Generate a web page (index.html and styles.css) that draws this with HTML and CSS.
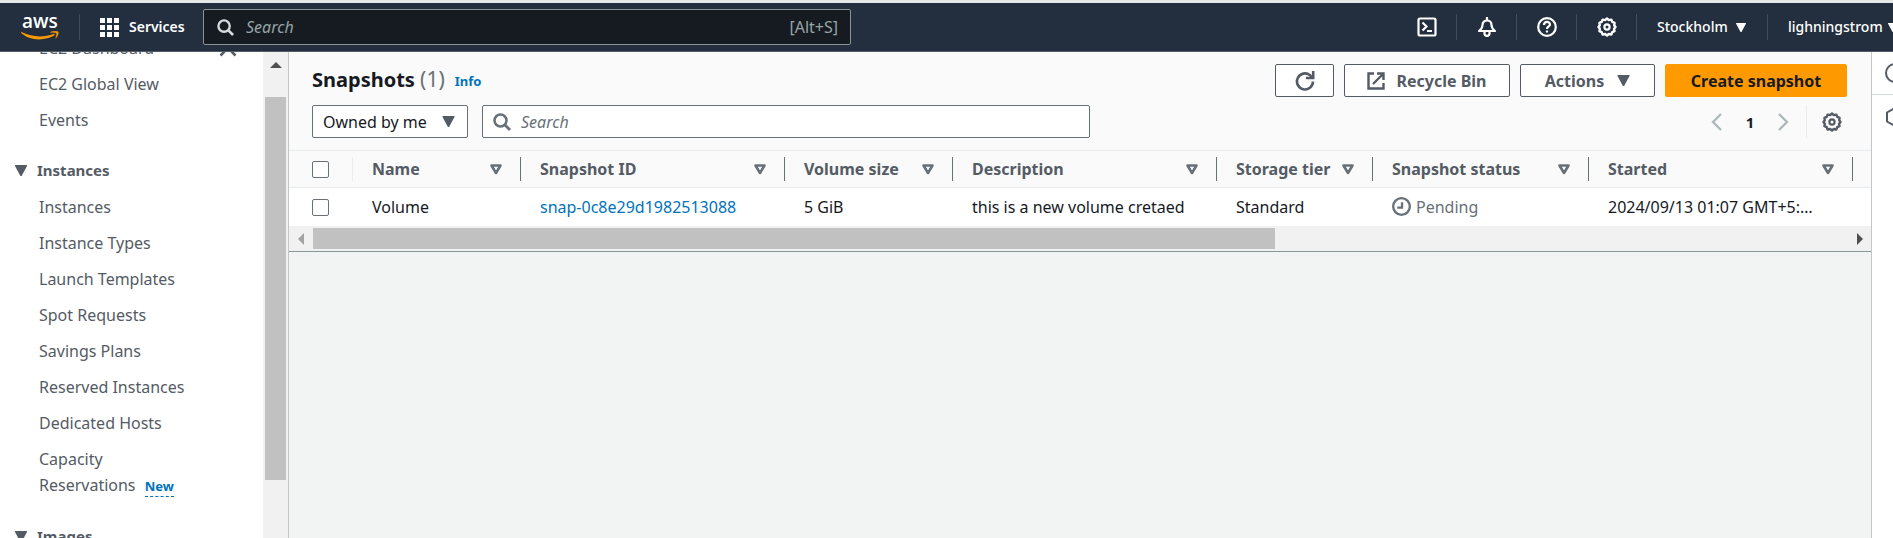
FILE: index.html
```html
<!DOCTYPE html>
<html lang="en">
<head>
<meta charset="utf-8">
<title>Snapshots | EC2</title>
<meta name="viewport" content="width=device-width, initial-scale=1">
<link rel="stylesheet" href="styles.css">
</head>
<body>
<svg class="sprite" aria-hidden="true">
  <symbol id="caret" viewBox="0 0 12 11"><path d="M0 0h12v1L6.600 11H5.400L0 1z" fill="currentColor"/></symbol>
  <symbol id="sort" viewBox="0 0 12 11"><path d="M1.500 1.500h9L6 9z" fill="none" stroke="currentColor" stroke-width="2.600" stroke-linejoin="round"/></symbol>
  <symbol id="search" viewBox="0 0 18 18"><circle cx="7.500" cy="7.500" r="6" fill="none" stroke="currentColor" stroke-width="2.500"/><path d="M11.800 11.800L17 17" stroke="currentColor" stroke-width="2.800"/></symbol>
  <symbol id="gear" viewBox="0 0 20 20"><path d="M10 1.500l1.900 1.600 2.500-.5.900 2.300 2.300 1-.4 2.400L18.500 10l-1.400 1.800.4 2.400-2.300 1-.9 2.300-2.500-.5L10 18.500 8.100 17l-2.500.5-.9-2.300-2.300-1 .4-2.400L1.500 10l1.300-1.700-.4-2.400 2.300-1 .9-2.300 2.500.5z" fill="none" stroke="currentColor" stroke-width="2.400" stroke-linejoin="round"/><circle cx="10" cy="10" r="2.600" fill="none" stroke="currentColor" stroke-width="2.200"/></symbol>
</svg>

<header class="topbar">
  <a class="logo" href="#" aria-label="AWS home">
    <span class="logo-text">aws</span>
    <svg class="logo-smile" viewBox="0 0 38 9"><path d="M0 .8C10 6 22 7 33 2.800l.9 1.300C23 10.500 9 10 0 1.800z" fill="#f90"/><path d="M29.500 1.300C32 0 36 0 37 .8c.8 1-.3 4.700-2.300 6.400.7-2 1.400-4.300.9-5-.6-.8-3.600-.9-6.100-.9z" fill="#f90" stroke="#f90" stroke-width=".5"/></svg>
  </a>
  <button class="services">
    <svg viewBox="0 0 19 19" width="19" height="19" fill="currentColor"><path d="M0 0h5v5H0zM7 0h5v5H7zM14 0h5v5h-5zM0 7h5v5H0zM7 7h5v5H7zM14 7h5v5h-5zM0 14h5v5H0zM7 14h5v5H7zM14 14h5v5h-5z"/></svg>
    <span>Services</span>
  </button>
  <label class="global-search">
    <svg width="17" height="17"><use href="#search"/></svg>
    <input type="text" placeholder="Search" aria-label="Search services">
    <kbd>[Alt+S]</kbd>
  </label>
  <div class="tools">
    <button class="tool" aria-label="CloudShell"><svg width="20" height="20" viewBox="0 0 20 20" fill="none" stroke="currentColor" stroke-width="2.200"><rect x="1.500" y="1.500" width="17" height="17" rx="1.500"/><path d="M5.500 5.500l4 4-4 4M10 14h5"/></svg></button>
    <button class="tool" aria-label="Notifications"><svg width="20" height="20" viewBox="0 0 20 20" fill="none" stroke="currentColor" stroke-width="2.200" stroke-linejoin="round"><path d="M10 0v3M2 14c2.500-2 3.500-3.500 3.500-6 0-6 9-6 9 0 0 2.500 1 4 3.500 6z"/><path d="M7.500 14v2.500a2.500 2.300 0 0 0 5 0V14"/></svg></button>
    <button class="tool" aria-label="Help"><svg width="20" height="20" viewBox="0 0 20 20" fill="none" stroke="currentColor" stroke-width="2.200"><circle cx="10" cy="10" r="8.800"/><path d="M7 8c0-4 6-4 6-.5 0 2-3 2-3 4.500M10 13.500v2"/></svg></button>
    <button class="tool" aria-label="Settings"><svg width="20" height="20"><use href="#gear"/></svg></button>
    <button class="region"><span>Stockholm</span><svg width="10" height="9"><use href="#caret"/></svg></button>
    <button class="account"><span>lighningstrom</span><svg width="10" height="9"><use href="#caret"/></svg></button>
  </div>
</header>

<div class="shell">
  <aside class="sidebar">
    <nav class="side-nav" aria-label="EC2">
      <div class="first-row">
        <a href="#">EC2 Dashboard</a>
        <button class="close" aria-label="Close navigation"><svg width="18" height="18" viewBox="0 0 18 18"><path d="M1.500 1.500l15 15M16.500 1.500l-15 15" stroke="currentColor" stroke-width="2.600"/></svg></button>
      </div>
      <a href="#">EC2 Global View</a>
      <a href="#">Events</a>
      <button class="section"><svg width="12" height="11"><use href="#caret"/></svg>Instances</button>
      <a href="#">Instances</a>
      <a href="#">Instance Types</a>
      <a href="#">Launch Templates</a>
      <a href="#">Spot Requests</a>
      <a href="#">Savings Plans</a>
      <a href="#">Reserved Instances</a>
      <a href="#">Dedicated Hosts</a>
      <a href="#">Capacity<br>Reservations <span class="new">New</span></a>
      <button class="section"><svg width="12" height="11"><use href="#caret"/></svg>Images</button>
    </nav>
    <div class="vscroll" aria-hidden="true">
      <svg width="12" height="6" viewBox="0 0 12 6"><path d="M6 0l6 6H0z" fill="#505050"/></svg>
      <div class="vthumb"></div>
    </div>
  </aside>

  <main class="content">
    <section class="panel">
      <div class="panel-head">
        <h1>Snapshots <span class="count">(1)</span></h1>
        <a class="info" href="#">Info</a>
        <div class="actions">
          <button class="btn refresh" aria-label="Refresh"><svg width="20" height="20" viewBox="0 0 20 20" fill="none" stroke="currentColor" stroke-width="2.600"><path d="M18 10.500A8 8 0 1 1 15 4.200l2.500 2.300"/><path d="M18.200 0v7H11"/></svg></button>
          <button class="btn recycle"><svg width="18" height="18" viewBox="0 0 18 18" fill="none" stroke="currentColor" stroke-width="2.400"><path d="M7 1.500H1.500v15h15V11M10 1.500h6.500V8M16.500 1.500L6 12"/></svg>Recycle Bin</button>
          <button class="btn menu">Actions<svg width="13" height="11"><use href="#caret"/></svg></button>
          <button class="btn primary">Create snapshot</button>
        </div>
      </div>
      <div class="filters">
        <button class="owner" aria-haspopup="listbox">Owned by me<svg width="13" height="11"><use href="#caret"/></svg></button>
        <label class="table-search">
          <svg width="18" height="18"><use href="#search"/></svg>
          <input type="text" placeholder="Search" aria-label="Search snapshots">
        </label>
        <div class="pager">
          <button class="arrow" aria-label="Previous page"><svg width="11" height="18" viewBox="0 0 11 18"><path d="M10 1L2 9l8 8" fill="none" stroke="currentColor" stroke-width="2.200"/></svg></button>
          <span class="page">1</span>
          <button class="arrow" aria-label="Next page"><svg width="11" height="18" viewBox="0 0 11 18"><path d="M1 1l8 8-8 8" fill="none" stroke="currentColor" stroke-width="2.200"/></svg></button>
          <button class="prefs" aria-label="Preferences"><svg width="20" height="20"><use href="#gear"/></svg></button>
        </div>
      </div>
      <table class="grid">
        <colgroup><col class="c-check"><col class="c-name"><col class="c-id"><col class="c-size"><col class="c-desc"><col class="c-tier"><col class="c-status"><col class="c-start"><col></colgroup>
        <thead>
          <tr>
            <th class="check"><div><input type="checkbox" aria-label="Select all"></div></th>
            <th><div>Name<svg width="12" height="11"><use href="#sort"/></svg></div></th>
            <th><div>Snapshot ID<svg width="12" height="11"><use href="#sort"/></svg></div></th>
            <th><div>Volume size<svg width="12" height="11"><use href="#sort"/></svg></div></th>
            <th><div>Description<svg width="12" height="11"><use href="#sort"/></svg></div></th>
            <th><div>Storage tier<svg width="12" height="11"><use href="#sort"/></svg></div></th>
            <th><div>Snapshot status<svg width="12" height="11"><use href="#sort"/></svg></div></th>
            <th><div>Started<svg width="12" height="11"><use href="#sort"/></svg></div></th>
            <th></th>
          </tr>
        </thead>
        <tbody>
          <tr>
            <td class="check"><input type="checkbox" aria-label="Select Volume"></td>
            <td>Volume</td>
            <td><a href="#">snap-0c8e29d1982513088</a></td>
            <td>5 GiB</td>
            <td>this is a new volume cretaed</td>
            <td>Standard</td>
            <td><span class="pending"><svg width="19" height="19" viewBox="0 0 18 18" fill="none" stroke="currentColor" stroke-width="2.200"><circle cx="9" cy="9" r="7.900"/><path d="M9.500 5v5H5"/></svg>Pending</span></td>
            <td>2024/09/13 01:07 GMT+5:…</td>
            <td></td>
          </tr>
        </tbody>
      </table>
      <div class="hscroll" aria-hidden="true">
        <svg width="6" height="12" viewBox="0 0 6 12"><path d="M6 0v12L0 6z" fill="#a3a3a3"/></svg>
        <div class="htrack"><div class="hthumb"></div></div>
        <svg width="6" height="12" viewBox="0 0 6 12"><path d="M0 0v12l6-6z" fill="#505050"/></svg>
      </div>
    </section>
  </main>

  <aside class="help-rail">
    <button aria-label="Info panel"><svg width="20" height="20" viewBox="0 0 20 20" fill="none" stroke="currentColor" stroke-width="2"><circle cx="10" cy="10" r="9"/><path d="M10 9v6M10 5v2"/></svg></button>
    <button aria-label="Shortcuts"><svg width="20" height="20" viewBox="0 0 20 20" fill="none" stroke="currentColor" stroke-width="2"><path d="M10 1l8 4.500v9L10 19l-8-4.500v-9z"/></svg></button>
  </aside>
</div>
</body>
</html>
```
FILE: styles.css
```css
* { box-sizing: border-box; }

body {
  margin: 0;
  height: 100vh;
  display: flex;
  flex-direction: column;
  overflow: hidden;
  border-top: 3px solid #e6e8e8;
  background: #f2f3f3;
  color: #16191f;
  font: 16px/26px "Noto Sans", "Open Sans", sans-serif;
}

a { color: inherit; text-decoration: none; }
button {
  display: flex;
  align-items: center;
  padding: 0;
  border: 0;
  background: none;
  color: inherit;
  font: inherit;
  white-space: nowrap;
}
input { font: inherit; }
svg { display: block; flex: none; }
.sprite { position: absolute; width: 0; height: 0; }

/* Top bar */
.topbar {
  flex: none;
  display: flex;
  align-items: center;
  height: 49px;
  background: #232f3e;
  border-bottom: 1px solid #545b64;
  color: #fff;
}
.logo {
  flex: none;
  width: 80px;
  height: 26px;
  padding-left: 21px;
  border-right: 1px solid #414d5c;
}
.logo-text { display: block; height: 17px; padding-left: 1px; font: 600 19px/14px "Open Sans", sans-serif; }
.logo-smile { width: 38px; height: 9px; }
.services { gap: 10px; width: 123px; padding-left: 20px; font-size: 14px; font-weight: 600; }
.global-search {
  flex: none;
  display: flex;
  align-items: center;
  width: 648px;
  height: 36px;
  padding: 0 12px 0 13px;
  background: #161b22;
  border: 1px solid #879596;
  border-radius: 2px;
  color: #d5dbdb;
}
.global-search input, .table-search input {
  flex: 1;
  min-width: 0;
  padding: 0 12px;
  border: 0;
  outline: 0;
  background: none;
  color: inherit;
}
.global-search input::placeholder { color: #95a5a6; font-style: italic; opacity: 1; }
.global-search kbd { color: #95a5a6; font: inherit; }
.tools { display: flex; align-items: center; margin-left: auto; font-size: 14px; font-weight: 500; }
.tools button { flex: none; height: 26px; border-right: 1px solid #414d5c; }
.tool { width: 60px; justify-content: center; }
.region { gap: 8px; width: 131px; padding-left: 20px; }
.tools .account { gap: 5px; width: 125px; padding-left: 20px; border: 0; }

/* Shell */
.shell { flex: 1; display: flex; min-height: 0; }

.sidebar { flex: none; display: flex; width: 289px; background: #fff; border-right: 1px solid #c0c6ca; overflow: hidden; }
.side-nav {
  flex: 1;
  display: flex;
  flex-direction: column;
  gap: 10px;
  margin-top: -17px;
  color: #545b64;
}
.side-nav a { padding-left: 39px; }
.first-row { display: flex; justify-content: space-between; align-items: center; padding-right: 26px; }
.section { flex: none; gap: 10px; margin: 14px 0 1px; padding-left: 15px; font-weight: 700; font-size: 15px; }
.new { margin-left: 5px; padding-bottom: 1px; border-bottom: 1px dashed #0073bb; color: #0073bb; font-size: 13px; font-weight: 700; }
.vscroll { flex: none; width: 25px; padding: 10px 2px 0; background: #f1f1f1; }
.vscroll svg { margin: 0 auto 29px 5px; }
.vthumb { width: 21px; height: 383px; background: #c1c1c1; }

.content { flex: 1; min-width: 0; }
.panel { background: #fafafa; border-bottom: 1px solid #879596; }
.panel-head { display: flex; align-items: flex-start; height: 53px; padding: 12px 24px 0 23px; }
h1 { margin: 0; font-size: 20px; font-weight: 700; line-height: 30px; }
.count { color: #687078; font-size: 21px; font-weight: 400; }
.info { margin-left: 10px; padding-top: 4px; color: #0073bb; font-size: 13px; font-weight: 700; }
.actions { display: flex; gap: 10px; margin-left: auto; }
.btn {
  justify-content: center;
  height: 33px;
  border: 1px solid #545b64;
  border-radius: 2px;
  background: #fff;
  color: #545b64;
  font-weight: 700;
}
.refresh { width: 59px; }
.recycle { width: 166px; gap: 11px; }
.menu { width: 135px; gap: 13px; }
.primary { width: 182px; background: #f90; border-color: #f90; color: #16191f; }

.filters { display: flex; align-items: flex-start; height: 45px; padding: 0 29px 0 23px; }
.owner { justify-content: space-between; width: 156px; height: 33px; padding: 0 12px 0 10px; background: #fff; border: 1px solid #687078; border-radius: 2px; }
.owner svg { color: #545b64; }
.table-search {
  display: flex;
  align-items: center;
  width: 608px;
  height: 33px;
  margin-left: 14px;
  padding: 0 10px;
  background: #fff;
  border: 1px solid #687078;
  border-radius: 2px;
  color: #687078;
}
.table-search input { padding: 0 10px; }
.table-search input::placeholder { color: #687078; font-style: italic; opacity: 1; }
.pager { display: flex; align-items: center; margin-left: auto; }
.arrow { color: #aab7b8; }
.page { width: 56px; text-align: center; font-size: 15px; font-weight: 700; }
.prefs { height: 33px; margin-left: 17px; padding-left: 15px; border-left: 1px solid #eaeded; color: #545b64; }

/* Table */
.grid { width: 100%; table-layout: fixed; border-collapse: separate; border-spacing: 0; }
.c-check { width: 64px; }
.c-name { width: 168px; }
.c-id { width: 264px; }
.c-size { width: 168px; }
.c-desc { width: 264px; }
.c-tier { width: 156px; }
.c-status { width: 216px; }
.c-start { width: 264px; }
th { height: 38px; padding: 0; border: solid #eaeded; border-width: 1px 0; color: #545b64; text-align: left; }
th div { display: flex; align-items: center; justify-content: space-between; height: 24px; padding: 0 18px 0 19px; border-right: 1px solid #687078; line-height: 24px; white-space: nowrap; }
th svg { color: #687078; }
th.check div { padding-left: 23px; border-color: #eaeded; }
td { height: 38px; padding: 0 0 1px 19px; background: #fff; white-space: nowrap; }
td.check { padding: 0 0 0 23px; }
td a { color: #0073bb; }
input[type="checkbox"] { appearance: none; display: block; width: 17px; height: 17px; margin: 0; background: #fff; border: 1px solid #687078; border-radius: 2px; }
.pending { display: flex; align-items: center; gap: 5px; color: #687078; }

.hscroll { display: flex; align-items: center; height: 25px; padding: 0 8px 0 9px; background: #f1f1f1; }
.htrack { flex: 1; margin: 0 9px; }
.hthumb { width: 62.7%; height: 21px; background: #c1c1c1; }

.help-rail { flex: none; display: flex; flex-direction: column; width: 22px; background: #fff; border-left: 1px solid #c0c6ca; overflow: hidden; color: #545b64; }
.help-rail button { flex: none; height: 43px; padding-left: 13px; }
.help-rail button:first-child { border-bottom: 1px solid #d5dbdb; }
```
